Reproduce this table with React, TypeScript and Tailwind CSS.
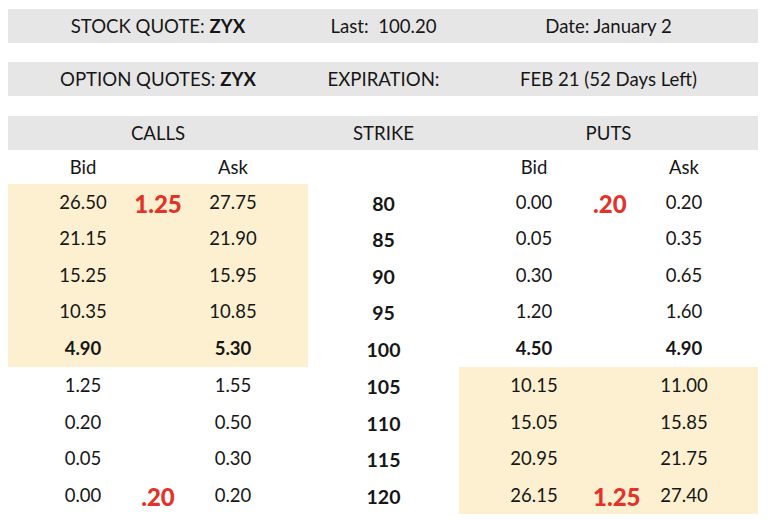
import React from "react";

type Row = {
  strike: string;
  cb: string;
  ca: string;
  pb: string;
  pa: string;
  cred?: string;
  pred?: string;
  bold?: boolean;
  callHi?: boolean;
  h: string;
};

const rows: Row[] = [
  { strike: "80", cb: "26.50", ca: "27.75", pb: "0.00", pa: "0.20", cred: "1.25", pred: ".20", callHi: true, h: "h-[37px]" },
  { strike: "85", cb: "21.15", ca: "21.90", pb: "0.05", pa: "0.35", callHi: true, h: "h-[36px]" },
  { strike: "90", cb: "15.25", ca: "15.95", pb: "0.30", pa: "0.65", callHi: true, h: "h-[37px]" },
  { strike: "95", cb: "10.35", ca: "10.85", pb: "1.20", pa: "1.60", callHi: true, h: "h-[36px]" },
  { strike: "100", cb: "4.90", ca: "5.30", pb: "4.50", pa: "4.90", bold: true, callHi: true, h: "h-[37px]" },
  { strike: "105", cb: "1.25", ca: "1.55", pb: "10.15", pa: "11.00", h: "h-[37px]" },
  { strike: "110", cb: "0.20", ca: "0.50", pb: "15.05", pa: "15.85", h: "h-[37px]" },
  { strike: "115", cb: "0.05", ca: "0.30", pb: "20.95", pa: "21.75", h: "h-[36px]" },
  { strike: "120", cb: "0.00", ca: "0.20", pb: "26.15", pa: "27.40", cred: ".20", pred: "1.25", h: "h-[37px]" },
];

function Bar({ a, b, c }: { a: React.ReactNode; b: React.ReactNode; c: React.ReactNode }) {
  return (
    <div className="grid h-[34px] grid-cols-[300px_151px_299px] items-center bg-[#e7e6e6] pt-[2px] text-[18.6px]">
      <div className="text-center">{a}</div>
      <div className="text-center whitespace-pre">{b}</div>
      <div className="text-center">{c}</div>
    </div>
  );
}

export default function App() {
  return (
    <div
      className="h-[520px] w-[768px] bg-white pl-[8px] pt-[9px] text-[#161616]"
      style={{ fontFamily: "Lato, 'Open Sans', sans-serif" }}
    >
      <div className="flex w-[750px] flex-col">
        <Bar
          a={
            <>
              STOCK QUOTE: <b>ZYX</b>
            </>
          }
          b={"Last:  100.20"}
          c={"Date: January 2"}
        />
        <div className="h-[19px]" />
        <Bar
          a={
            <>
              OPTION QUOTES: <b>ZYX</b>
            </>
          }
          b={"EXPIRATION:"}
          c={"FEB 21 (52 Days Left)"}
        />
        <div className="h-[20px]" />
        <Bar a="CALLS" b="STRIKE" c="PUTS" />

        <div className="grid h-[34px] grid-cols-[300px_151px_299px] items-center pt-[1px] text-[18.5px]">
          <div className="grid grid-cols-[100px_50px_100px] pl-[25px] text-center">
            <div>Bid</div>
            <div />
            <div>Ask</div>
          </div>
          <div />
          <div className="grid grid-cols-[100px_50px_100px] pl-[25px] text-center">
            <div>Bid</div>
            <div />
            <div>Ask</div>
          </div>
        </div>

        {rows.map((r) => (
          <div key={r.strike} className={`grid grid-cols-[300px_151px_299px] ${r.h}`}>
            <div
              className={`grid grid-cols-[100px_50px_100px] items-center pl-[25px] text-center text-[18.5px] ${
                r.callHi ? "bg-[#fcf0d0]" : ""
              } ${r.bold ? "font-bold" : ""}`}
            >
              <div>{r.cb}</div>
              <div className="translate-y-[1px] whitespace-nowrap text-[24px] font-black text-[#e4322a]">
                {r.cred ?? ""}
              </div>
              <div>{r.ca}</div>
            </div>
            <div className="flex translate-y-[1px] items-center justify-center text-[19.5px] font-bold">
              {r.strike}
            </div>
            <div
              className={`grid grid-cols-[100px_50px_100px] items-center pl-[25px] text-center text-[18.5px] ${
                r.callHi ? "" : "bg-[#fcf0d0]"
              } ${r.bold ? "font-bold" : ""}`}
            >
              <div>{r.pb}</div>
              <div className="translate-y-[1px] whitespace-nowrap pl-[9px] text-left text-[24px] font-black text-[#e4322a]">
                {r.pred ?? ""}
              </div>
              <div>{r.pa}</div>
            </div>
          </div>
        ))}
      </div>
    </div>
  );
}
